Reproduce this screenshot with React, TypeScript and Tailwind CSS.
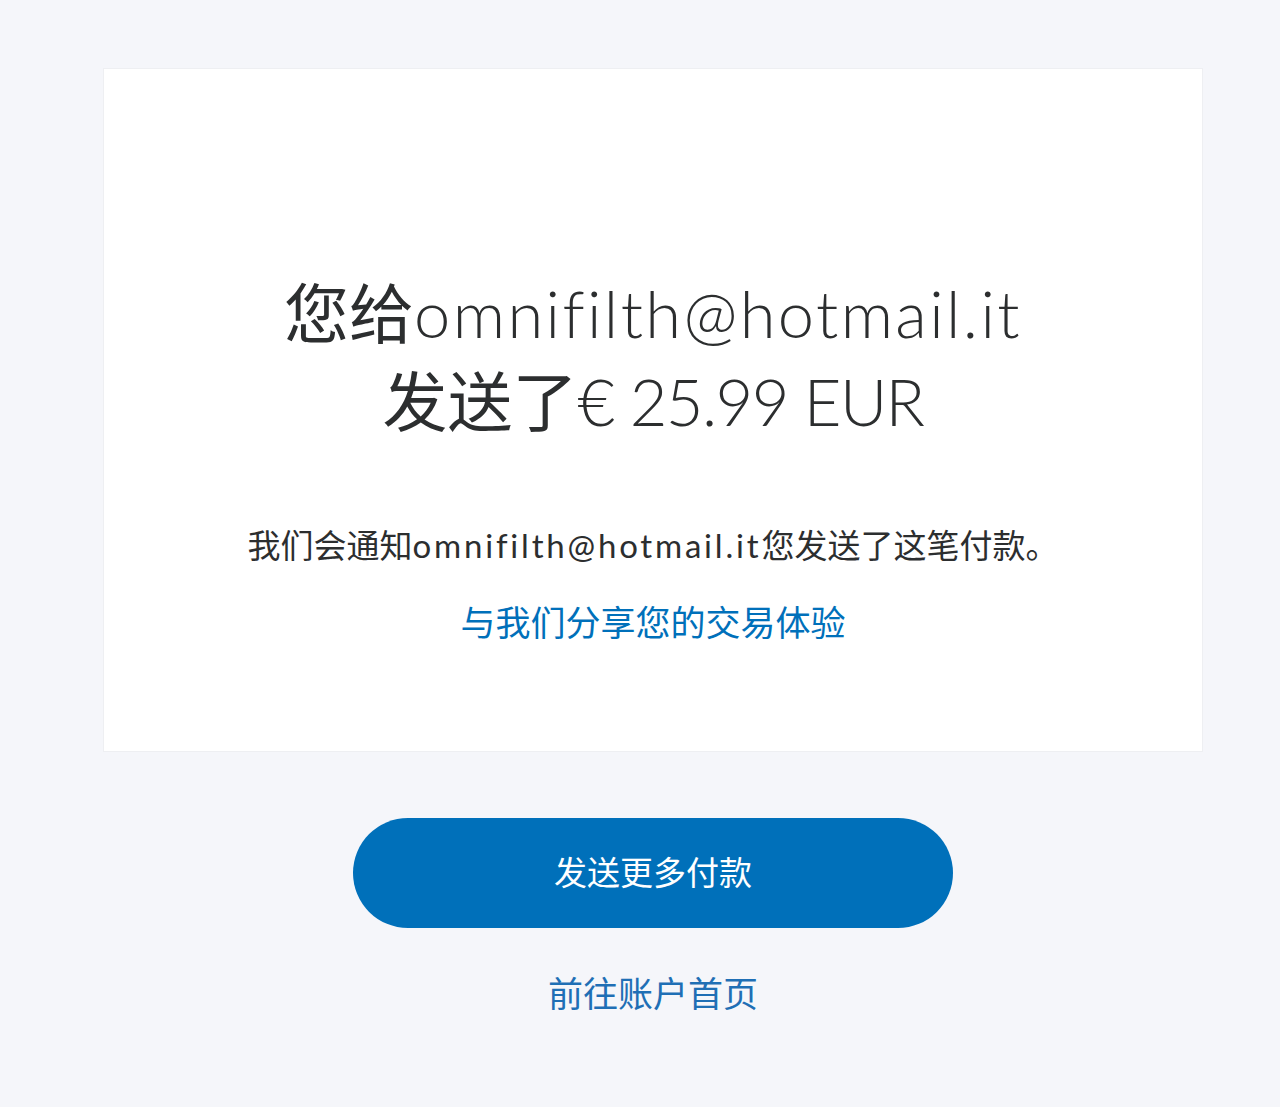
import { FC } from 'react';

const FONT = "font-['Lato','Noto_Sans_CJK_SC',sans-serif]";

const App: FC = () => {
  return (
    <div className={`min-h-[1107px] w-full bg-[#f5f6fa] pt-[68px] ${FONT}`}>
      <div className="ml-[103px] w-[1100px]">
        {/* Confirmation card */}
        <div className="flex h-[684px] flex-col items-center border border-[#eeeff2] bg-white pt-[200px] text-center">
          <h1 className="text-[65px] leading-[88px] text-[#2c2e2f]">
            <span className="font-normal">您给</span>
            <span className="font-light tracking-[2.4px]">omnifilth@hotmail.it</span>
            <br />
            <span className="font-normal">发送了</span>
            <span className="font-light tracking-[-1.6px]">€ 25.99 EUR</span>
          </h1>
          <p className="mt-[78px] text-[33px] leading-[44px] text-[#2c2e2f]">
            我们会通知<span className="tracking-[2.8px]">omnifilth@hotmail.it</span>您发送了这笔付款。
          </p>
          <a href="#" className="mt-[33px] text-[35px] leading-[44px] text-[#0070ba]">
            与我们分享您的交易体验
          </a>
        </div>

        <div className="flex flex-col items-center">
          <button className="mt-[66px] h-[110px] w-[600px] rounded-full bg-[#0070ba] text-[33px] font-normal text-white">
            发送更多付款
          </button>
          <a href="#" className="mt-[43px] text-[35px] leading-[44px] text-[#1f6fb5]">
            前往账户首页
          </a>
        </div>
      </div>
    </div>
  );
};

export default App;
